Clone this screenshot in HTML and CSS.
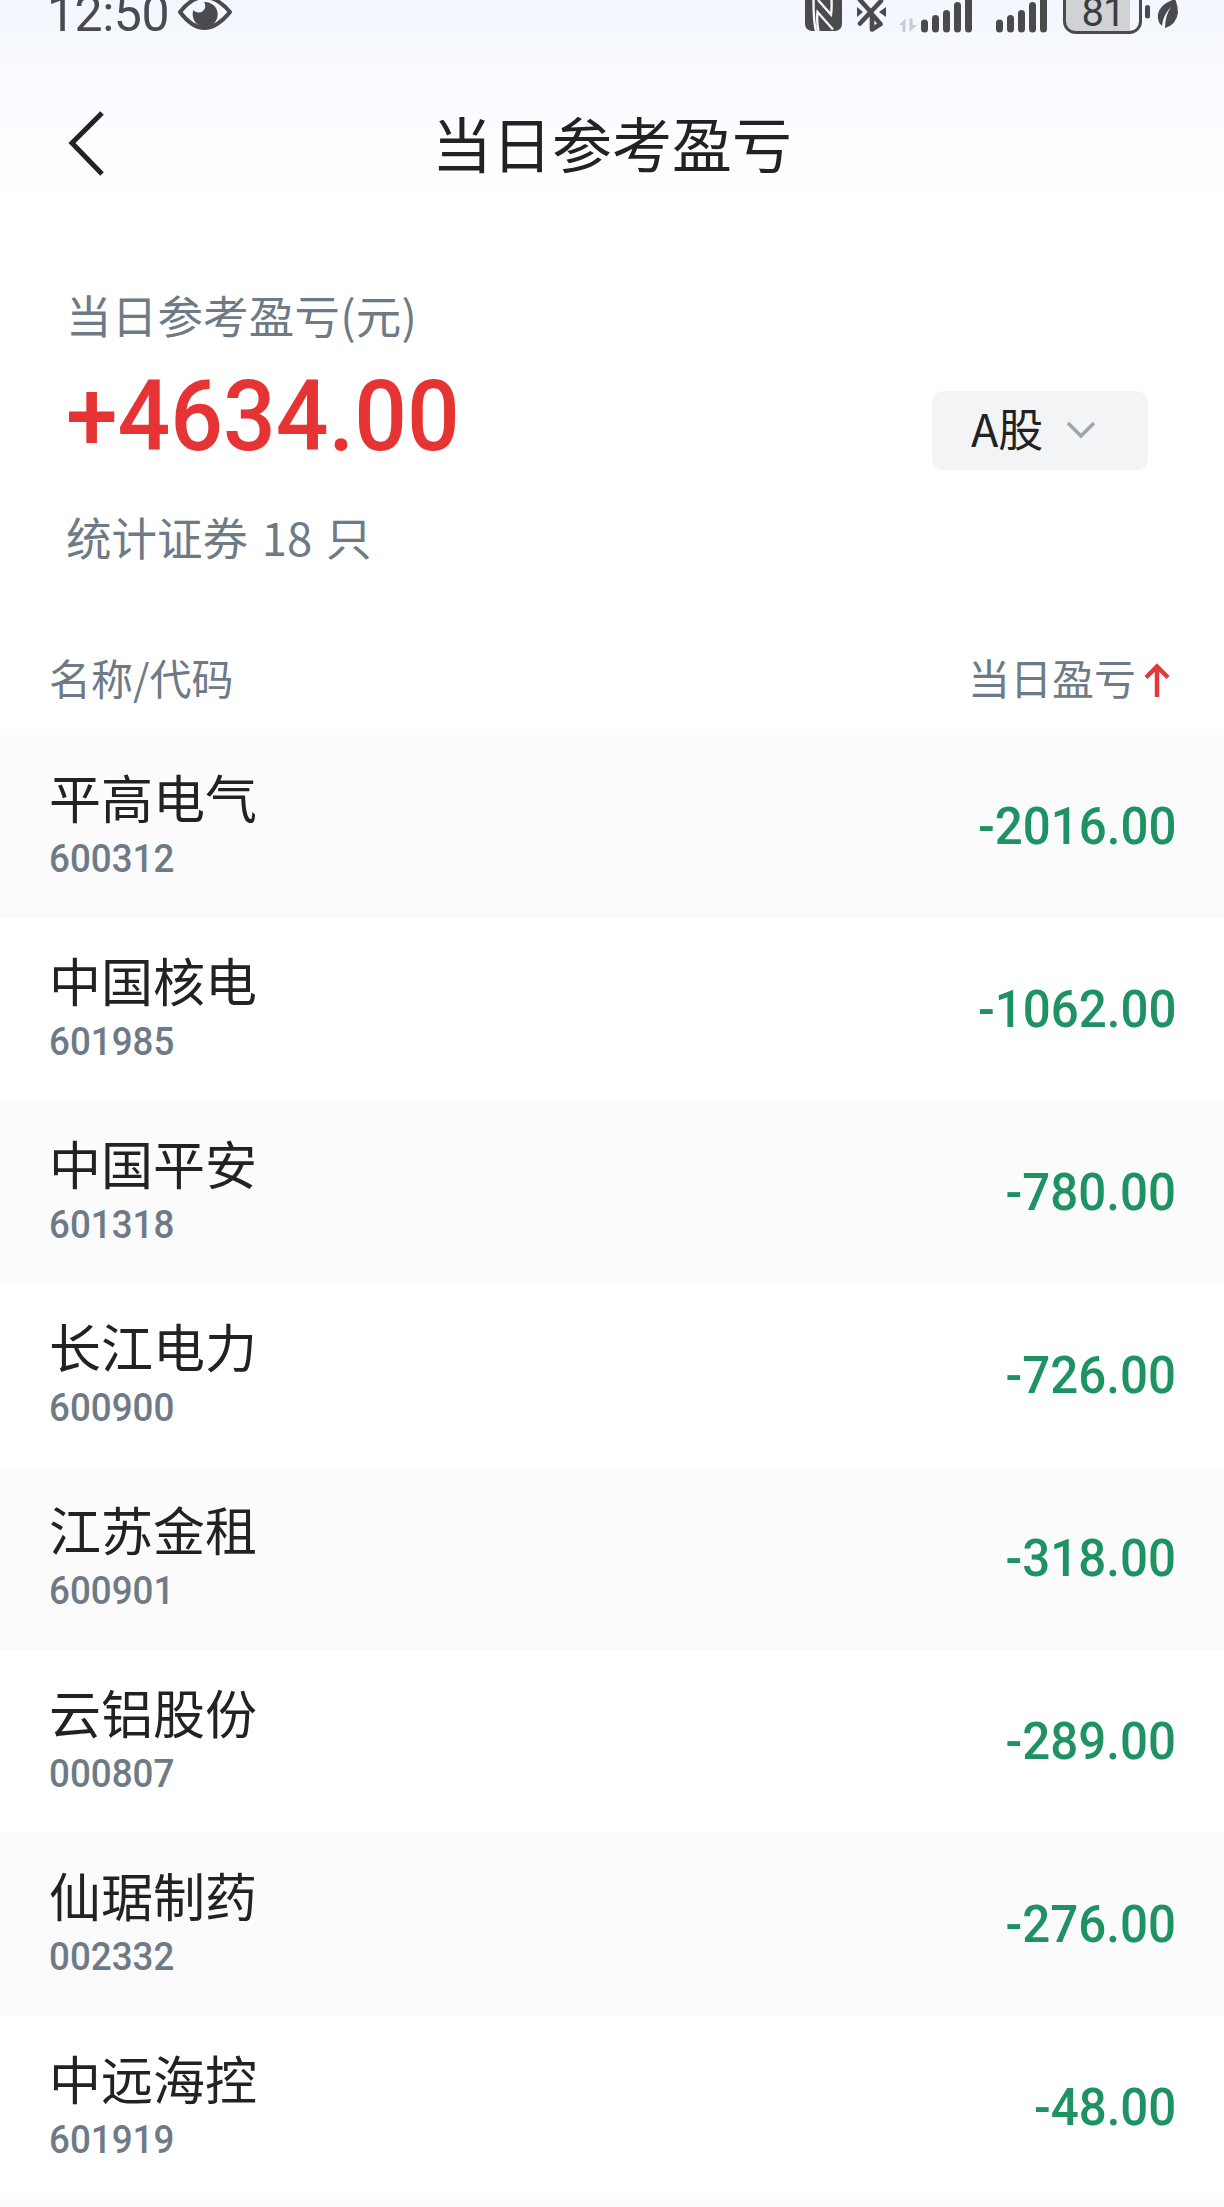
FILE: index.html
```html
<!DOCTYPE html>
<html lang="zh-CN">
<head>
<meta charset="utf-8">
<title>当日参考盈亏</title>
<link rel="stylesheet" href="styles.css">
</head>
<body>
<div class="top">
  <div class="status">
    <span class="time">12:50</span>
    <svg class="eye" width="56" height="40" viewBox="177 0 56 40">
      <path d="M180 12Q204-18 230 12Q204 44 180 12Z" fill="none" stroke="#4a4b4d" stroke-width="4" stroke-linejoin="round"/>
      <path d="M204 2A12.500 12.500 0 1 1 193.500 10A6.500 6.500 0 1 0 204 2Z" fill="#4a4b4d"/>
    </svg>
    <svg class="icons" width="400" height="40" viewBox="800 0 400 40">
      <rect x="805" y="-6" width="37" height="37" rx="7" fill="#4a4b4d"/>
      <path d="M813.500 0Q813.500 22 816 31M818.500 31Q816.500 22 817.500 12L833 29.500M818 0L831 14.500Q832 8 831.500 0" fill="none" stroke="#f5f8fe" stroke-width="2.400"/>
      <path d="M860 23.500L881 1M860 0L870 11M872 14V29.500L880.500 24L870 12" fill="none" stroke="#4a4b4d" stroke-width="4.600" stroke-linecap="round" stroke-linejoin="round"/>
      <path d="M857 7L863 12L857 17ZM886 7L879 12L886 17Z" fill="#4a4b4d"/>
      <path d="M899 25L905.500 18.500V32H902.500V25ZM909.500 18.500H912.500V25H917L909.500 32Z" fill="#c9cbd0"/>
      <g stroke="#4a4b4d" stroke-width="7" stroke-linecap="round">
        <path d="M924.500 23V29M935.500 18.500V29M946.500 13.500V29M957.500 5.500V29M968.500-4V29"/>
        <path d="M999.500 23V29M1010.500 18.500V29M1021.500 13.500V29M1032.500 5.500V29M1043.500-4V29"/>
      </g>
      <path d="M1065 0H1130V31H1075Q1065 31 1065 21Z" fill="#d0d2d6"/>
      <rect x="1064.500" y="-12" width="76" height="44.500" rx="11" fill="none" stroke="#4a4b4d" stroke-width="3"/>
      <text x="1081.500" y="26" class="level">81</text>
      <path d="M1147.500 7.500V16" stroke="#4a4b4d" stroke-width="5" stroke-linecap="round"/>
      <path d="M1175-1Q1160 4 1158 14Q1157 22 1162 26Q1163 15 1171 7Q1165 16 1165 28Q1176 25 1178 13Q1178 5 1175-1Z" fill="#4a4b4d"/>
    </svg>
  </div>
  <header class="nav">
    <svg class="back" width="40" height="70" viewBox="0 0 40 70"><path d="M37 5L7 35L37 66" fill="none" stroke="#222" stroke-width="5"/></svg>
    <h1>当日参考盈亏</h1>
  </header>
</div>
<section class="summary">
  <div class="figures">
    <div class="label">当日参考盈亏(元)</div>
    <div class="total num">+4634.00</div>
    <div class="count">统计证券 18 只</div>
  </div>
  <button class="market"><span>A股</span><svg width="30" height="20" viewBox="0 0 30 20"><path d="M2 2L15 15L28 2" fill="none" stroke="#9ea6b0" stroke-width="3.600"/></svg></button>
</section>
<div class="columns">
  <span>名称/代码</span>
  <span class="sort">当日盈亏<svg width="26" height="34" viewBox="0 0 26 34"><path d="M13 34V4M2 14.500L13 3.500L24 14.500" fill="none" stroke="#e03b3b" stroke-width="4.500"/></svg></span>
</div>
<ul class="list">
  <li><div><div class="name">平高电气</div><div class="code num">600312</div></div><div class="value num">-2016.00</div></li>
  <li><div><div class="name">中国核电</div><div class="code num">601985</div></div><div class="value num">-1062.00</div></li>
  <li><div><div class="name">中国平安</div><div class="code num">601318</div></div><div class="value num">-780.00</div></li>
  <li><div><div class="name">长江电力</div><div class="code num">600900</div></div><div class="value num">-726.00</div></li>
  <li><div><div class="name">江苏金租</div><div class="code num">600901</div></div><div class="value num">-318.00</div></li>
  <li><div><div class="name">云铝股份</div><div class="code num">000807</div></div><div class="value num">-289.00</div></li>
  <li><div><div class="name">仙琚制药</div><div class="code num">002332</div></div><div class="value num">-276.00</div></li>
  <li><div><div class="name">中远海控</div><div class="code num">601919</div></div><div class="value num">-48.00</div></li>
  <li class="next"></li>
</ul>
</body>
</html>
```
FILE: styles.css
```css
* { box-sizing: border-box; margin: 0; padding: 0; }
body {
  width: 1224px;
  height: 2207px;
  overflow: hidden;
  background: #fff;
  color: #222;
  font-family: "Noto Sans CJK SC", sans-serif;
}
svg { display: block; flex: none; }
.top { height: 210px; background: linear-gradient(#f3f6fe, #f9fbff 35%, #fff); }
.status { display: flex; height: 40px; overflow: hidden; }
.time {
  width: 130px;
  height: 58px;
  margin: -15px 0 0 47px;
  font: 400 50px/58px Roboto, sans-serif;
  letter-spacing: -.5px;
  color: #4a4b4d;
}
.icons { margin-left: 567px; }
.level { font: 400 40px Roboto, sans-serif; fill: #3c3d3f; letter-spacing: -1px; }
.nav { display: grid; grid-template-columns: 64px 1fr 64px; align-items: center; height: 110px; margin-top: 48px; }
.back { margin-left: 65px; }
h1 { font-size: 60px; line-height: 80px; font-weight: 400; text-align: center; margin-top: -2px; }
.summary { display: flex; justify-content: space-between; padding: 71px 76px 0 66px; height: 435px; }
.num { font-family: Roboto, sans-serif; font-weight: 500; transform: scaleX(.947); transform-origin: left center; }
.label, .count { font-size: 45.500px; line-height: 66px; color: #6e7a86; }
.label { letter-spacing: .2px; }
.count { margin-top: 29px; word-spacing: 3.500px; }
.total { margin-top: 12px; font-size: 98px; line-height: 115px; color: #e63434; }
.market {
  display: flex;
  align-items: center;
  gap: 23px;
  width: 216px;
  height: 79px;
  margin-top: 110px;
  padding-left: 39px;
  border: 0;
  border-radius: 12px;
  background: #f3f4f6;
  color: #222;
  font: 400 45px/60px "Noto Sans CJK SC", sans-serif;
}
.market span { margin-top: -6px; }
.columns { display: flex; justify-content: space-between; padding: 0 54px 0 49px; height: 90px; font-size: 42px; line-height: 64px; color: #6e7a86; }
.sort { display: flex; align-items: center; gap: 8px; height: 64px; }
.sort svg { margin-top: 6px; }
.list { list-style: none; }
.list li { display: flex; justify-content: space-between; align-items: center; height: 183px; padding: 0 48px 0 49px; }
.list li:nth-child(odd) { background: #fbfbfb; }
.list .next { height: 8px; }
.name { margin-top: -9px; font-size: 52px; line-height: 70px; }
.code { margin-top: 3px; font-size: 39.500px; line-height: 48px; color: #6e7a86; transform: scaleX(.93); }
.value { font-size: 52px; line-height: 60px; color: #1f9263; transform-origin: right center; }
```
